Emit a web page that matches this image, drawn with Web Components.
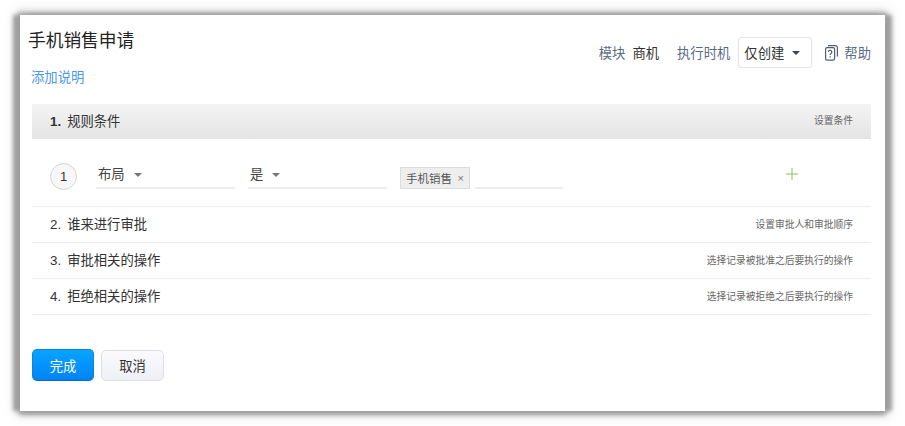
<!DOCTYPE html>
<html lang="zh">
<head>
<meta charset="utf-8">
<title>手机销售申请</title>
<style>
  html, body { margin: 0; height: 100%; background: #fff; overflow: hidden; }
  body { font-family: "Liberation Sans", "Noto Sans CJK SC", sans-serif; font-size: 13.33px; color: #333; }
</style>
</head>
<body>
<rule-page>
  <rule-header heading="手机销售申请" link="添加说明"></rule-header>
  <rule-step num="1." label="规则条件" hint="设置条件" active></rule-step>
  <rule-condition></rule-condition>
  <rule-step num="2." label="谁来进行审批" hint="设置审批人和审批顺序"></rule-step>
  <rule-step num="3." label="审批相关的操作" hint="选择记录被批准之后要执行的操作"></rule-step>
  <rule-step num="4." label="拒绝相关的操作" hint="选择记录被拒绝之后要执行的操作"></rule-step>
  <rule-actions></rule-actions>
</rule-page>
<script>
class RulePage extends HTMLElement {
  constructor() {
    super();
    this.attachShadow({mode: "open"}).innerHTML = `
    <style>
      :host { display: block; padding: 15px 20px; }
      .card {
        box-sizing: border-box;
        height: 396px;
        padding: 0 14px 0 12px;
        background: #fff;
        box-shadow: -7px 0 4px 0 #a0a0a0, 7px 0 4px 0 #a0a0a0, 0 3px 5px 1px #a4a4a4, 0 -1px 5px 2px #b0b0b0, 0 0 12px 6px rgba(0,0,0,.08);
      }
    </style>
    <div class="card"><slot></slot></div>`;
  }
}

class RuleHeader extends HTMLElement {
  constructor() {
    super();
    this.attachShadow({mode: "open"});
  }
  connectedCallback() {
    this.shadowRoot.innerHTML = `
    <style>
      :host { display: flex; justify-content: space-between; height: 89px; }
      h1 { margin: 13px 0 0 -4px; font-size: 17.7px; line-height: 26px; font-weight: 400; color: #222; }
      a { display: block; margin: 14px 0 0 -1px; font-size: 13.33px; line-height: 20px; color: #4a96ea; }
      .right { display: flex; align-items: center; height: 31px; margin-top: 22px; color: #5a6b85; }
      .val { color: #333; margin: 0 18px 0 7px; }
      .select {
        box-sizing: border-box; width: 74px; height: 31px; margin: 0 13px 0 8px; padding-left: 5px;
        display: flex; align-items: center;
        border: 1px solid #e2e4e6; border-radius: 3px; color: #333;
      }
      .caret { margin-left: 8px; border: 4px solid transparent; border-top: 4px solid #34495e; border-bottom: 0; }
      svg { margin-right: 6px; }
    </style>
    <div>
      <h1>${this.getAttribute("heading")}</h1>
      <a>${this.getAttribute("link")}</a>
    </div>
    <div class="right">
      <span>模块</span><span class="val">商机</span>
      <span>执行时机</span>
      <div class="select">仅创建<i class="caret"></i></div>
      <svg width="13" height="16" viewBox="0 0 13 16" fill="none" stroke="#555e6b" stroke-width="1.2">
        <rect x="0.6" y="2.6" width="9" height="12.6" rx="1.5"/>
        <path d="M3 .6h7.5a2 2 0 0 1 1.9 2v9"/>
        <path d="M3.4 7a1.7 1.7 0 1 1 2.6 1.5c-.6.4-.9.7-.9 1.5"/>
        <path d="M5.1 11.2v1.3"/>
      </svg>
      <span>帮助</span>
    </div>`;
  }
}

class RuleStep extends HTMLElement {
  constructor() {
    super();
    this.attachShadow({mode: "open"});
  }
  connectedCallback() {
    this.shadowRoot.innerHTML = `
    <style>
      :host {
        display: flex; align-items: center; justify-content: space-between;
        box-sizing: border-box; height: 36px; padding: 0 18px 2px;
        border-bottom: 1px solid #ececec; color: #333;
      }
      :host([active]) {
        height: 35px; border-bottom: 0; padding-bottom: 3px;
        background: linear-gradient(#f4f4f4, #e4e4e4);
      }
      :host([active]) .num { font-weight: 700; }
      .num { margin-right: 6px; }
      small { font-size: 9.75px; color: #666; }
    </style>
    <div><span class="num">${this.getAttribute("num")}</span>${this.getAttribute("label")}</div>
    <small>${this.getAttribute("hint")}</small>`;
  }
}

class RuleField extends HTMLElement {
  constructor() {
    super();
    this.attachShadow({mode: "open"}).innerHTML = `
    <style>
      :host {
        display: flex; align-items: center; box-sizing: border-box;
        height: 33px; padding: 3px 2px 0; border-bottom: 2px solid #eee; color: #444;
      }
      i { margin-left: 9px; margin-top: 3px; border: 4px solid transparent; border-top: 4px solid #777; border-bottom: 0; }
    </style>
    <slot></slot><i></i>`;
  }
}

class RuleCondition extends HTMLElement {
  constructor() {
    super();
    this.attachShadow({mode: "open"}).innerHTML = `
    <style>
      :host {
        display: flex; align-items: flex-end; box-sizing: border-box;
        height: 68px; padding: 0 0 17px 18px; border-bottom: 1px solid #ececec;
      }
      .index {
        box-sizing: border-box; width: 27px; height: 27px; margin: 0 19px -1px 0;
        display: flex; align-items: center; justify-content: center;
        border: 1px solid #d4d4d4; border-radius: 50%; background: #f7f7f7; font-size: 13px; color: #333;
      }
      rule-field { width: 139px; }
      rule-field + rule-field { margin-left: 13px; }
      .tags { display: flex; align-items: flex-end; margin-left: 13px; }
      .tag {
        box-sizing: border-box; height: 22px; width: 70px; padding: 0 5px; margin-bottom: 0;
        display: flex; align-items: center; justify-content: space-between;
        border: 1px solid #ddd; background: #eee; font-size: 11.5px; color: #555;
      }
      .tag span { font-size: 11px; color: #777; }
      .blank { width: 88px; height: 2px; margin-left: 5px; background: #eee; }
      .plus { margin: 0 0 9px 223px; }
    </style>
    <div class="index">1</div>
    <rule-field>布局</rule-field>
    <rule-field>是</rule-field>
    <div class="tags">
      <div class="tag">手机销售<span>×</span></div>
      <div class="blank"></div>
    </div>
    <svg class="plus" width="12" height="12" viewBox="0 0 12 12" stroke="#8cc152" stroke-width="1"><path d="M6 0v12M0 6h12"/></svg>`;
  }
}

class RuleActions extends HTMLElement {
  constructor() {
    super();
    this.attachShadow({mode: "open"}).innerHTML = `
    <style>
      :host { display: flex; align-items: center; gap: 7px; margin-top: 34px; }
      button {
        box-sizing: border-box; width: 63px; height: 32px; padding: 0;
        font: 13.33px "Liberation Sans", "Noto Sans CJK SC", sans-serif; border-radius: 5px; cursor: pointer;
      }
      .primary { width: 62px; color: #fff; border: 1px solid #0a84e0; border-bottom-color: #0668c8; background: linear-gradient(#08a4ff, #0083f5); }
      .plain { height: 31px; color: #333; border: 1px solid #dcdfe8; background: linear-gradient(#fbfbfd, #eef0f6); }
    </style>
    <button class="primary">完成</button>
    <button class="plain">取消</button>`;
  }
}

customElements.define("rule-page", RulePage);
customElements.define("rule-header", RuleHeader);
customElements.define("rule-step", RuleStep);
customElements.define("rule-field", RuleField);
customElements.define("rule-condition", RuleCondition);
customElements.define("rule-actions", RuleActions);
</script>
</body>
</html>
